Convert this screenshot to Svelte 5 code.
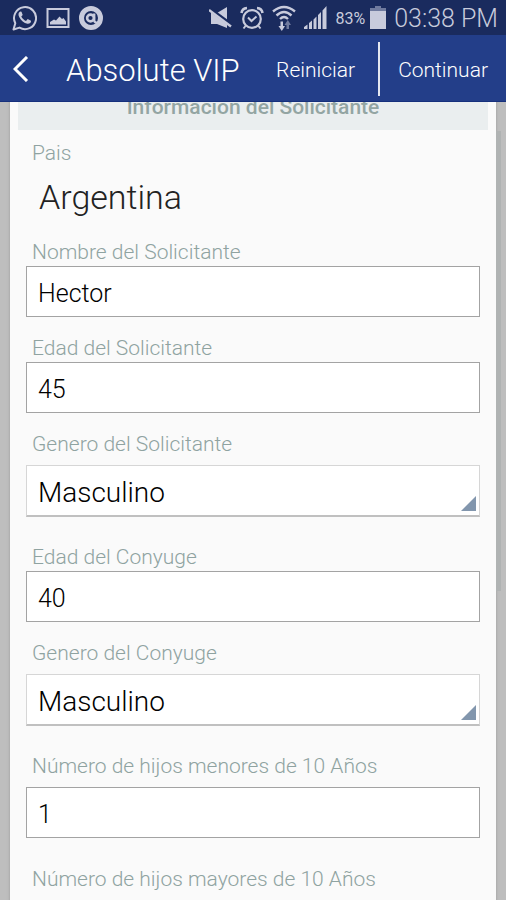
<script>
  let fields = $state([
    { id: 'nombre', label: 'Nombre del Solicitante', kind: 'text', value: 'Hector', look: 'first' },
    { id: 'edad', label: 'Edad del Solicitante', kind: 'text', value: '45', look: '' },
    { id: 'genero', label: 'Genero del Solicitante', kind: 'select', value: 'Masculino', look: 'roomy' },
    { id: 'edad-conyuge', label: 'Edad del Conyuge', kind: 'text', value: '40', look: 'spaced' },
    { id: 'genero-conyuge', label: 'Genero del Conyuge', kind: 'select', value: 'Masculino', look: 'roomy' },
    { id: 'hijos-menores', label: 'Número de hijos menores de 10 Años', kind: 'text', value: '1', look: 'spaced roomy' },
    { id: 'hijos-mayores', label: 'Número de hijos mayores de 10 Años', kind: 'text', value: '0', look: 'last roomy' }
  ]);
</script>

<div class="screen">
  <div class="status">
    <div class="notifications">
      <svg width="25" height="26" viewBox="0 0 25 26">
        <path d="M1.500 24.500 L3.300 18.200 A11 11 0 1 1 7.500 22.600 Z" fill="none" stroke="#c8cbdc" stroke-width="2" stroke-linejoin="round" />
        <path d="M8.200 6.500 C6.300 7.400 6 9.700 7.200 12 C9 15.500 12 18.200 15.400 18.700 C17.400 19 19.300 17.500 19 15.700 L15.700 14 L14 16 C11.900 15.200 10.200 13.500 9.300 11.600 L10.700 9.900 L9.500 6.800 Z" fill="#c8cbdc" />
      </svg>
      <svg width="24" height="22" viewBox="0 0 24 22">
        <rect x="1.500" y="2" width="21" height="18" fill="none" stroke="#c8cbdc" stroke-width="2" />
        <path d="M4 17.500 V15 L8 12.500 L10 13.500 L13.500 9.500 L16 12 L17.500 11 L20 14.500 V17.500 Z" fill="#c8cbdc" />
      </svg>
      <svg width="24" height="24" viewBox="0 0 24 24">
        <circle cx="12" cy="12" r="9.500" fill="none" stroke="#c8cbdc" stroke-width="5" />
        <circle cx="11.500" cy="12" r="3.400" fill="none" stroke="#c8cbdc" stroke-width="2.600" />
        <path d="M15.200 7.500 V14.500 Q15.500 17 19 16.500" fill="none" stroke="#c8cbdc" stroke-width="2.400" />
      </svg>
    </div>
    <div class="system">
      <svg width="23" height="22" viewBox="0 0 23 22">
        <path d="M2 6 H8 L18 0 V21 L8 17 H2 Z" fill="#c8cbdc" />
        <path d="M0 1.500 L23 18.500" stroke="#1a2b5e" stroke-width="4" />
        <path d="M0 3 L22 19.500" stroke="#c8cbdc" stroke-width="2.400" />
      </svg>
      <svg width="24" height="24" viewBox="0 0 24 24">
        <circle cx="12" cy="13" r="8.800" fill="none" stroke="#c8cbdc" stroke-width="2.200" />
        <path d="M8 11.500 L11.500 15 L16.500 10.500 M5.500 20 L3.500 22.500 M18.500 20 L20.500 22.500" fill="none" stroke="#c8cbdc" stroke-width="2" />
        <path d="M1.500 7 Q2 2.500 7 2 M22.500 7 Q22 2.500 17 2" fill="none" stroke="#c8cbdc" stroke-width="2.600" />
      </svg>
      <svg width="24" height="26" viewBox="0 0 24 26">
        <path d="M1 6.500 Q12 -2.500 23 6.500 M4.500 10.500 Q12 3.500 19.500 10.500 M8 14 Q12 10 16 14" fill="none" stroke="#c8cbdc" stroke-width="2.400" />
        <path d="M8.500 16.500 H11 V21 H13 L9.800 26 L6.500 21 H8.500 Z" fill="#c8cbdc" />
        <path d="M14.500 24 V20 H12.500 L15.800 15 L19 20 H17 V24 Z" fill="#6f7a9e" />
      </svg>
      <svg width="23" height="23" viewBox="0 0 23 23">
        <path d="M0 23 V21 L3.500 18.500 V23 Z M5 23 V17 L8 14.500 V23 Z M9.500 23 V13.500 L12.500 10.500 V23 Z M14 23 V9 L17 6 V23 Z M18.500 23 V4.500 L22.500 0 V23 Z" fill="#c8cbdc" />
      </svg>
      <span class="percent">83%</span>
      <svg width="16" height="23" viewBox="0 0 16 23">
        <path d="M5 0 H11 V2 H16 V6 H0 V2 H5 Z" fill="#6f7a9e" />
        <rect y="5" width="16" height="18" fill="#c8cbdc" />
      </svg>
      <span class="clock">03:38 PM</span>
    </div>
  </div>

  <header>
    <button class="back" aria-label="Volver">
      <svg width="16" height="26" viewBox="0 0 16 26">
        <path d="M14 1 L2 13 L14 25" fill="none" stroke="#fff" stroke-width="3" />
      </svg>
    </button>
    <h1>Absolute VIP</h1>
    <button class="action">Reiniciar</button>
    <span class="divider"></span>
    <button class="action">Continuar</button>
  </header>

  <main>
    <form class="card">
      <h2>Información del Solicitante</h2>
      <div class="country">
        <span class="label">Pais</span>
        <p>Argentina</p>
      </div>
      {#each fields as field (field.id)}
        <div class="field {field.look}">
          <label class="label" for={field.id}>{field.label}</label>
          {#if field.kind === 'select'}
            <div class="picker">
              <select id={field.id} bind:value={field.value}>
                <option>Masculino</option>
                <option>Femenino</option>
              </select>
              <svg width="15" height="15" viewBox="0 0 15 15">
                <path d="M15 0 V15 H0 Z" fill="#8296ad" />
              </svg>
            </div>
          {:else}
            <input id={field.id} type="text" bind:value={field.value} />
          {/if}
        </div>
      {/each}
    </form>
    <div class="scrollbar"></div>
  </main>
</div>

<style>
  .screen {
    display: flex;
    flex-direction: column;
    height: 100vh;
    overflow: hidden;
    font-family: Roboto, "Noto Sans", sans-serif;
    font-weight: 300;
    background: #bebebe;
  }

  .status {
    flex: none;
    display: flex;
    align-items: center;
    justify-content: space-between;
    height: 35px;
    padding: 0 8px 0 12px;
    background: #1a2b5e;
    color: #c8cbdc;
  }

  .notifications,
  .system {
    display: flex;
    align-items: center;
  }

  .notifications {
    gap: 9px;
  }

  .system {
    gap: 8px;
  }

  .percent {
    padding-top: 2px;
    font-size: 16px;
    font-weight: 400;
    margin-right: -3px;
  }

  .clock {
    padding-top: 2px;
    font-size: 25px;
    line-height: 33px;
  }

  header {
    flex: none;
    display: flex;
    align-items: center;
    box-sizing: border-box;
    height: 67px;
    padding-top: 2px;
    background: #233e89;
    border-bottom: 1px solid #16307c;
    color: #fff;
  }

  button {
    padding: 0;
    border: 0;
    background: none;
    color: inherit;
    font: inherit;
  }

  .back {
    display: flex;
    padding: 0 37px 0 13px;
  }

  h1 {
    flex: 1;
    margin: 0;
    padding-top: 2px;
    font-size: 31px;
    font-weight: 300;
    white-space: nowrap;
  }

  .action {
    padding: 2px 18px 0;
    font-size: 21px;
  }

  .divider {
    width: 2px;
    height: 54px;
    margin-left: 5px;
    background: #e4e7f0;
  }

  main {
    flex: 1;
    min-height: 0;
    position: relative;
    overflow: hidden;
    padding: 0 10px;
  }

  .card {
    margin-top: -18px;
    padding: 0 16px;
    background: #fafafa;
    box-shadow: 0 0 3px #999;
  }

  h2 {
    margin: 0 -8px 9px;
    background: #eaeeef;
    color: #93a5a3;
    font-size: 21px;
    font-weight: 500;
    line-height: 46px;
    text-align: center;
  }

  .label {
    display: block;
    padding-left: 6px;
    color: #8fa3a1;
    font-size: 21px;
    line-height: 28px;
  }

  p {
    margin: 0;
    padding-left: 13px;
    color: #222;
    font-size: 34px;
    line-height: 60px;
  }

  .field {
    padding-top: 17px;
  }

  .first {
    padding-top: 11px;
  }

  .spaced {
    padding-top: 26px;
  }

  .last {
    padding-top: 27px;
  }

  .roomy .label {
    padding-bottom: 7px;
  }

  input,
  select {
    display: block;
    box-sizing: border-box;
    width: 100%;
    height: 51px;
    margin: 0;
    padding: 4px 11px 0;
    border: 1px solid #a3a3a3;
    border-radius: 0;
    outline: 0;
    background: #fff;
    color: #000;
    font: inherit;
    font-size: 25px;
  }

  .picker {
    position: relative;
  }

  select {
    appearance: none;
    height: 52px;
    padding-top: 3px;
    border-color: #d6d6d6;
    border-bottom: 2px solid #c0c0c0;
    font-size: 28px;
  }

  .picker svg {
    position: absolute;
    right: 4px;
    bottom: 6px;
    pointer-events: none;
  }

  .scrollbar {
    position: absolute;
    top: 29px;
    right: 5px;
    width: 5px;
    height: 460px;
    background: #b0b3b3;
  }
</style>
